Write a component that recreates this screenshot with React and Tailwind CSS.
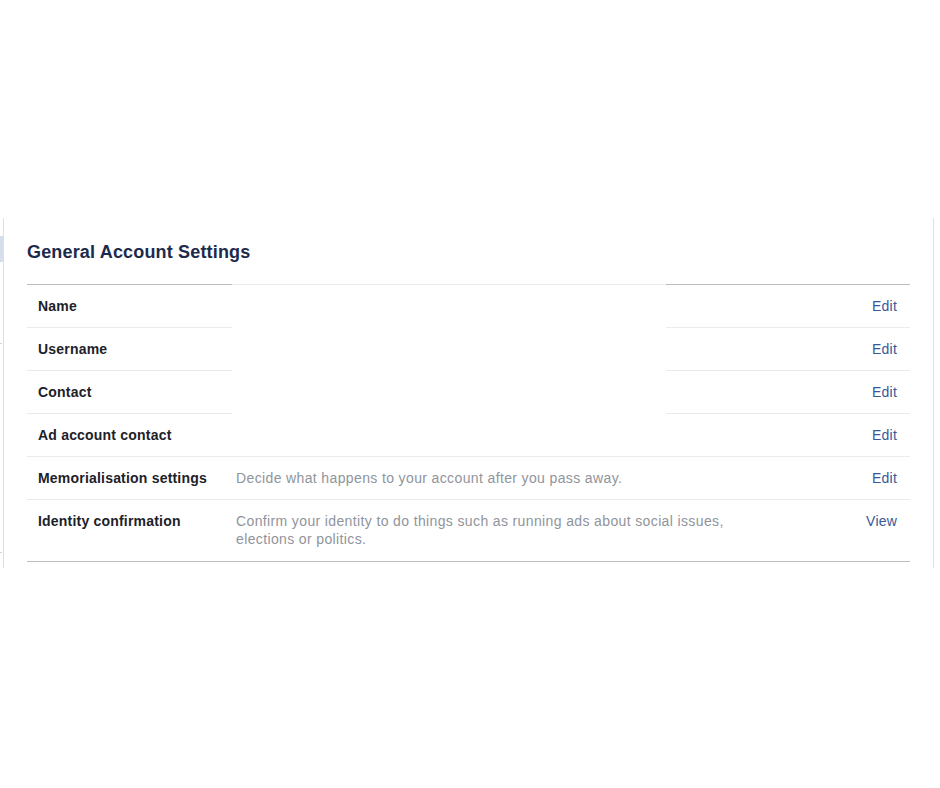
import React from "react";

const rows = [
  { label: "Name", desc: "", action: "Edit" },
  { label: "Username", desc: "", action: "Edit" },
  { label: "Contact", desc: "", action: "Edit" },
  { label: "Ad account contact", desc: "", action: "Edit" },
  { label: "Memorialisation settings", desc: "Decide what happens to your account after you pass away.", action: "Edit" },
  { label: "Identity confirmation", desc: "Confirm your identity to do things such as running ads about social issues, elections or politics.", action: "View" },
];

export default function App() {
  return (
    <div className="w-[940px] h-[788px] bg-white overflow-hidden" style={{ fontFamily: '"Liberation Sans", Arial, sans-serif' }}>
      <div className="pt-[218px] flex">
        {/* sidebar stub */}
        <div className="w-[3px] h-[350px] flex flex-col">
          <div className="mt-[18px] h-[26px] bg-[#d6deec]" />
          <div className="mt-[81px] h-px w-[2px] bg-[#d0d3d8]" />
          <div className="mt-[208px] h-px w-[2px] bg-[#d0d3d8]" />
        </div>
        {/* main panel */}
        <div className="w-[931px] h-[350px] border-l border-r border-[#dddfe2] pl-[23px] pr-[23px] pt-[24px]">
          <h2 className="text-[18px] leading-[20px] font-bold text-[#1c2a4c] tracking-[0.17px]">General Account Settings</h2>
          <div className="relative mt-[22px] border-t border-b border-[#b9bdc2]">
            {rows.map((r, i) => (
              <div key={r.label} className={`flex items-start text-[14px] leading-[18px] ${i === rows.length - 1 ? "pt-3 pb-[13px]" : "py-3 border-b border-[#e9ebee]"}`}>
                <div className="w-[209px] pl-[11px] font-bold text-[#1d2129] tracking-[0.2px] shrink-0">{r.label}</div>
                <div className="w-[510px] text-[#90949c] tracking-[0.37px] shrink-0">{r.desc}</div>
                <div className="flex-1 text-right pr-[13px] text-[#385898] tracking-[0.2px]">{r.action}</div>
              </div>
            ))}
            {/* redaction overlay */}
            <div className="absolute left-[205px] top-[-1px] w-[434px] h-[171px] bg-white border-t border-[#e9ebee]" />
          </div>
        </div>
      </div>
    </div>
  );
}
